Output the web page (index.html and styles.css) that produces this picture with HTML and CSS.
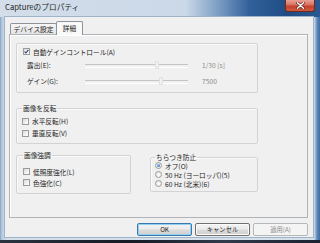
FILE: index.html
```html
<!DOCTYPE html>
<html lang="ja">
<head>
<meta charset="utf-8">
<title>Captureのプロパティ</title>
<link rel="stylesheet" href="styles.css">
</head>
<body>
<div class="window">
  <div class="titlebar">
    <span class="title">Captureのプロパティ</span>
    <div class="close">
      <svg width="9" height="7" viewBox="0 0 9 7"><path d="M1.5 0.8 L7.5 6.2 M7.5 0.8 L1.5 6.2" stroke="#4a1a12" stroke-width="2.6" stroke-linecap="round"/><path d="M1.5 0.8 L7.5 6.2 M7.5 0.8 L1.5 6.2" stroke="#ffffff" stroke-width="1.5" stroke-linecap="round"/></svg>
    </div>
  </div>
  <div class="client">
    <div class="tabs">
      <div class="tab">デバイス設定</div>
      <div class="tab active">詳細</div>
    </div>
    <div class="panel">
      <div class="group g1">
        <div class="check"><span class="box checked"><svg width="5" height="5" viewBox="0 0 5 5"><path d="M0.6 2.6 L1.9 4 L4.4 0.8" fill="none" stroke="#2b3f6b" stroke-width="1.1"/></svg></span>自動ゲインコントロール(A)</div>
        <div class="slider-row">
          <span class="slabel">露出(E):</span>
          <div class="track"><span class="thumb" style="left:70%"></span></div>
          <span class="value">1/30 [s]</span>
        </div>
        <div class="slider-row">
          <span class="slabel">ゲイン(G):</span>
          <div class="track"><span class="thumb" style="left:74%"></span></div>
          <span class="value">7500</span>
        </div>
      </div>
      <fieldset class="group g2">
        <legend>画像を反転</legend>
        <div class="check"><span class="box"></span>水平反転(H)</div>
        <div class="check"><span class="box"></span>垂直反転(V)</div>
      </fieldset>
      <div class="row2">
        <fieldset class="group g3">
          <legend>画像強調</legend>
          <div class="check"><span class="box"></span>低照度強化(L)</div>
          <div class="check"><span class="box"></span>色強化(C)</div>
        </fieldset>
        <fieldset class="group g4">
          <legend>ちらつき防止</legend>
          <div class="radio"><span class="dot on"></span>オフ(O)</div>
          <div class="radio"><span class="dot"></span>50 Hz (ヨーロッパ)(5)</div>
          <div class="radio"><span class="dot"></span>60 Hz (北米)(6)</div>
        </fieldset>
      </div>
    </div>
    <div class="buttons">
      <button class="btn default">OK</button>
      <button class="btn">キャンセル</button>
      <button class="btn" disabled>適用(A)</button>
    </div>
  </div>
</div>
</body>
</html>
```
FILE: styles.css
```css
* { box-sizing: border-box; }
body {
  margin: 0;
  width: 320px;
  height: 243px;
  overflow: hidden;
  background: linear-gradient(to right, #2a3340, #151a24 40%, #303a4a 70%, #1b2230);
  font-family: "Noto Sans CJK JP", "Noto Sans", sans-serif;
  font-size: 6.7px;
  color: #1c1c1c;
}
.window {
  height: 240px;
  display: flex;
  flex-direction: column;
  background:
    linear-gradient(to right, #86a6cb 0, #b9cadd 2px, #cdd9e6 5px, rgba(205,217,230,0) 8px),
    linear-gradient(to left, #3d6ca3 0, #5f8ab9 3px, #d5dfea 6px, #d5dfea 8px),
    #cfdbe8;
}
.titlebar {
  height: 17px;
  display: flex;
  align-items: flex-start;
  padding-left: 5px;
  background: linear-gradient(to right, #d3deea 0%, #cbd8e7 58%, #7d9fc5 68%, #31609a 78%, #1f4c84 90%, #2a5890 100%);
}
.title {
  font-size: 7.7px;
  line-height: 14px;
  color: #1e1e1e;
}
.close {
  margin-left: auto;
  margin-right: 5px;
  width: 30px;
  height: 12px;
  border: 1px solid #6e2a1e;
  border-top: none;
  border-radius: 0 0 3px 3px;
  background: linear-gradient(#e9a196 0%, #d8705f 45%, #c2412b 55%, #cf5a3f 100%);
  display: flex;
  align-items: center;
  justify-content: center;
}
.client {
  flex: 1;
  margin: 0 7px 3px 5px;
  background: #f0f0f0;
  padding: 4px 0 0 4px;
  box-shadow: 0 0 0 1px #9fb3c9;
}
.tabs {
  display: flex;
  align-items: flex-end;
  height: 13px;
  padding-left: 1px;
}
.tab {
  height: 11px;
  width: 47px;
  border: 1px solid #8e939b;
  border-bottom: none;
  border-radius: 2px 2px 0 0;
  background: linear-gradient(#f6f6f6, #e3e3e3);
  line-height: 10px;
  text-align: center;
}
.tab.active {
  width: 27px;
  height: 14px;
  margin-left: -1px;
  margin-bottom: -1px;
  position: relative;
  z-index: 1;
  background: #f9f9f9;
  line-height: 12px;
}
.panel {
  width: 299px;
  height: 184px;
  border: 1px solid #b0b3b8;
  background: #f0f0f0;
  box-shadow: inset 1px 1px 0 #ffffff;
  padding: 8px 0 0 6px;
}
.group {
  width: 242px;
  border: 1px solid #d3d3d3;
  border-radius: 2px;
  box-shadow: inset 1px 1px 0 #fafafa;
  margin: 0;
  min-width: 0;
}
legend {
  padding: 0 1px;
  line-height: 9px;
  color: #1c1c1c;
}
.g1 {
  height: 50px;
  padding: 2px 0 0 6px;
}
.check {
  height: 11px;
  display: flex;
  align-items: center;
  gap: 3px;
}
.box {
  width: 7px;
  height: 7px;
  border: 1px solid #9a9b9b;
  background: linear-gradient(135deg, #d9d9d9, #f6f6f6 70%, #ffffff);
  display: flex;
  align-items: center;
  justify-content: center;
  flex: none;
}
.slider-row {
  height: 16px;
  padding-left: 4px;
  display: flex;
  align-items: center;
}
.slabel {
  width: 58px;
}
.track {
  width: 103px;
  height: 16px;
  position: relative;
}
.track::before {
  content: "";
  position: absolute;
  left: 0;
  right: 0;
  top: 7px;
  height: 2px;
  border-top: 1px solid #c4c4c4;
  border-bottom: 1px solid #ffffff;
}
.thumb {
  position: absolute;
  top: 4px;
  width: 4px;
  height: 8px;
  margin-left: -2px;
  border: 1px solid #e0e0e0;
  border-radius: 1px;
  background: #f0f0f0;
}
.value {
  margin-left: 14px;
  color: #8a8a8a;
}
.g2 {
  margin-top: 11px;
  padding: 2px 0 4px 5px;
}
.g2 .check {
  height: 12px;
}
.row2 {
  display: flex;
  align-items: flex-start;
  margin-top: 7px;
}
.g3 {
  width: 115px;
  padding: 6px 0 5px 6px;
}
.g4 {
  width: 108px;
  margin-left: 19px;
  margin-top: 3px;
  padding: 0 0 3px 4px;
}
.g4 legend {
  line-height: 7px;
}
.radio {
  height: 9px;
  display: flex;
  align-items: center;
  gap: 3px;
}
.dot {
  width: 7px;
  height: 7px;
  border-radius: 50%;
  border: 1px solid #9a9b9b;
  background: radial-gradient(circle at 60% 60%, #ffffff, #dcdcdc);
  display: flex;
  align-items: center;
  justify-content: center;
  flex: none;
}
.dot.on::after {
  content: "";
  width: 3px;
  height: 3px;
  border-radius: 50%;
  background: radial-gradient(circle at 35% 35%, #8fc1f0, #1f5fae);
}
.buttons {
  display: flex;
  gap: 3px;
  margin-top: 5px;
  padding-left: 128px;
}
.btn {
  width: 55px;
  height: 13px;
  padding: 0;
  font-family: inherit;
  font-size: 6.3px;
  line-height: 11px;
  color: #1c1c1c;
  border: 1px solid #707070;
  border-radius: 2px;
  background: linear-gradient(#f3f3f3 0%, #ebebeb 48%, #dcdcdc 52%, #cfcfcf 100%);
  box-shadow: inset 0 0 0 1px #fbfbfb;
}
.btn.default {
  border-color: #3a79b0;
  box-shadow: inset 0 0 0 1px #8fd0f3;
}
.btn:disabled {
  color: #8d8d8d;
  border-color: #b5b8bb;
  background: #f4f4f4;
  box-shadow: none;
}
```
